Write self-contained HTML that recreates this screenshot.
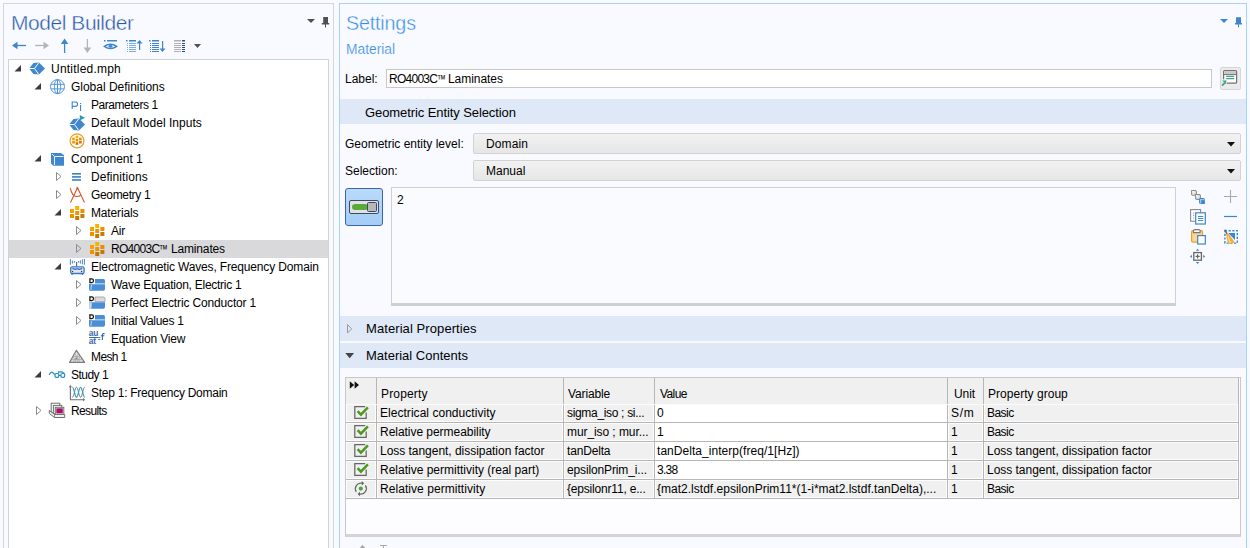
<!DOCTYPE html><html><head><meta charset="utf-8"><style>
*{margin:0;padding:0;box-sizing:border-box}
html,body{width:1250px;height:548px;overflow:hidden;background:#f8faff;font-family:"Liberation Sans",sans-serif;font-size:12px;color:#000}
.a{position:absolute}
.t{position:absolute;white-space:nowrap;line-height:14px}
svg{position:absolute;overflow:visible}
</style></head><body>
<div class="a" style="left:3px;top:3px;width:331px;height:560px;border:1px solid #d6d6d6;background:#f8faff"></div>
<div class="t" style="left:11px;top:12px;font-size:21px;line-height:22px;letter-spacing:-0.45px;color:#2858a8;-webkit-text-stroke:0.4px #f8faff">Model Builder</div>
<svg style="left:0;top:0" width="1250" height="60"><path d="M307 19h8l-4 4z" fill="#505050"/><path d="M323.2 17h4.8v6h1.2v1.4h-3.2v3h-1v-3h-3.2v-1.4h1.4z" fill="#505050"/></svg>
<svg style="left:0;top:0" width="340" height="60">
<g fill="#3d86cc" stroke="#3d86cc"><path d="M12 45.5l5.5-3.8v7.6z" stroke="none"/><path d="M16 45.5h10" stroke-width="1.3"/></g>
<g fill="#b4b4b4" stroke="#b4b4b4"><path d="M49 45.5l-5.5-3.8v7.6z" stroke="none"/><path d="M35 45.5h10" stroke-width="1.3"/></g>
<g fill="#3d86cc" stroke="#3d86cc"><path d="M64.6 38.6l3.8 5.5h-7.6z" stroke="none"/><path d="M64.6 43v10" stroke-width="1.3"/></g>
<g fill="#b4b4b4" stroke="#b4b4b4"><path d="M87.4 53l3.8-5.5h-7.6z" stroke="none"/><path d="M87.4 39v10" stroke-width="1.3"/></g>
<g fill="#3d86cc"><rect x="104" y="40" width="1.5" height="1.5"/><rect x="107" y="40" width="10" height="1.5"/>
<path d="M104.3 46.4q6.2-4.4 12.4 0q-6.2 4.4-12.4 0z" fill="none" stroke="#3d86cc" stroke-width="1.4"/><ellipse cx="110.5" cy="46.4" rx="2" ry="1.3"/></g>
<g fill="#3d86cc"><rect x="126" y="40" width="1.5" height="1.5"/><rect x="129" y="40" width="7" height="1.5"/>
<rect x="127" y="43" width="1" height="1" fill="#7ab0e0"/><rect x="129" y="43" width="7" height="1" fill="#7ab0e0"/>
<rect x="127" y="45" width="1" height="1" fill="#7ab0e0"/><rect x="129" y="45" width="7" height="1" fill="#7ab0e0"/>
<rect x="127" y="47" width="1" height="1" fill="#7ab0e0"/><rect x="129" y="47" width="7" height="1" fill="#7ab0e0"/>
<rect x="127" y="49" width="1" height="1" fill="#7ab0e0"/><rect x="129" y="49" width="7" height="1" fill="#7ab0e0"/>
<rect x="127" y="51" width="1" height="1" fill="#7ab0e0"/><rect x="129" y="51" width="7" height="1" fill="#7ab0e0"/>
<path d="M139.5 40l3 3.5h-6z"/><rect x="139" y="42" width="1.2" height="8"/></g>
<g fill="#3d86cc"><rect x="149" y="40" width="1.5" height="1.5"/><rect x="152" y="40" width="7" height="1.5"/>
<rect x="150" y="43" width="1" height="1"/><rect x="152" y="43" width="7" height="1"/>
<rect x="150" y="45" width="1" height="1"/><rect x="152" y="45" width="7" height="1"/>
<rect x="150" y="47" width="1" height="1"/><rect x="152" y="47" width="7" height="1"/>
<rect x="150" y="49" width="1" height="1"/><rect x="152" y="49" width="7" height="1"/>
<rect x="150" y="51" width="1" height="1"/><rect x="152" y="51" width="7" height="1"/>
<path d="M162.5 52l3-3.5h-6z"/><rect x="162" y="41" width="1.2" height="8"/></g>
<g><rect x="174" y="40" width="7" height="1.5" fill="#b0b0b0"/><rect x="182" y="40" width="3" height="1.5" fill="#2c4a80"/>
<rect x="174" y="43" width="7" height="1" fill="#b0b0b0"/><rect x="182" y="43" width="3" height="1" fill="#2c4a80"/>
<rect x="174" y="45" width="7" height="1" fill="#b0b0b0"/><rect x="182" y="45" width="3" height="1" fill="#2c4a80"/>
<rect x="174" y="47" width="7" height="1" fill="#b0b0b0"/><rect x="182" y="47" width="3" height="1" fill="#2c4a80"/>
<rect x="174" y="49" width="7" height="1" fill="#b0b0b0"/><rect x="182" y="49" width="3" height="1" fill="#2c4a80"/>
<rect x="174" y="51" width="7" height="1" fill="#b0b0b0"/><rect x="182" y="51" width="3" height="1" fill="#2c4a80"/></g>
<path d="M194 44h7l-3.5 4z" fill="#505050"/>
</svg>
<div class="a" style="left:8px;top:59px;width:321px;height:500px;border:1px solid #d2d2d2;background:#fff"></div>
<div class="a" style="left:9px;top:240px;width:319px;height:18px;background:#d9d9dc"></div>
<svg style="left:0;top:0" width="340" height="548"><path d="M21 65v6.5h-6.5z" fill="#3c3c3c"/><path d="M29 68.5L33.5 63.0L39 62.5L45 68.5L39 74.5L33.5 74.0z" fill="#3f88d0"/><path d="M29 68.5H34.5L38.5 63.0M34.5 68.5L38.5 74.0" stroke="#fff" stroke-width="1" fill="none"/><path d="M41 83v6.5h-6.5z" fill="#3c3c3c"/><g fill="none" stroke="#4f96dc" stroke-width="1"><circle cx="57.5" cy="86.6" r="7"/><ellipse cx="57.5" cy="86.6" rx="3.2" ry="7"/><path d="M57.5 79.6v14M50.9 84.3h13.2M50.9 88.89999999999999h13.2"/></g><path d="M72.2 109V102h3.2a2.2 2.2 0 0 1 0 4.4H72.2" fill="none" stroke="#3d86d0" stroke-width="1.1"/><rect x="80" y="105" width="1.1" height="6" fill="#3d86d0"/><rect x="80" y="103" width="1.1" height="1.1" fill="#3d86d0"/><path d="M69 124.5L73.5 119.0L79 118.5L85 124.5L79 130.5L73.5 130.0z" fill="#3f88d0"/><path d="M69 124.5H74.5L78.5 119.0M74.5 124.5L78.5 130.0" stroke="#fff" stroke-width="1" fill="none"/><path d="M79.8 115L85 117.8L79.8 120.6z" fill="#2a9ab8"/><circle cx="77" cy="140.8" r="7" fill="#fff" stroke="#ec9a2a" stroke-width="1.2"/><rect x="75.63" y="135.6" width="2.64" height="2.64" fill="#f6b400"/><rect x="72.2" y="137.58" width="2.64" height="2.64" fill="#f4a200"/><rect x="75.63" y="138.9" width="2.64" height="2.64" fill="#ee9400"/><rect x="79.06" y="137.58" width="2.64" height="2.64" fill="#e89000"/><rect x="72.2" y="140.88" width="2.64" height="2.64" fill="#ee9000"/><rect x="75.63" y="142.2" width="2.64" height="2.64" fill="#c87800"/><rect x="79.06" y="140.88" width="2.64" height="2.64" fill="#c47a10"/><path d="M41 155v6.5h-6.5z" fill="#3c3c3c"/><path d="M51 153H61L64 155.2V165.7H53.4L51 163.5z" fill="#3f88d0"/><path d="M52 154L54.5 156.5H63.5M54.5 156.5V165" stroke="#e8f0fa" stroke-width="1" fill="none"/><path d="M56.5 172.5l4.5 4-4.5 4z" fill="none" stroke="#8c8c8c" stroke-width="1"/><g fill="#3a80cc"><rect x="72" y="173" width="9" height="1.6"/><rect x="72" y="176.1" width="9" height="1.6"/><rect x="72" y="179.2" width="9" height="1.6"/></g><path d="M56.5 190.5l4.5 4-4.5 4z" fill="none" stroke="#8c8c8c" stroke-width="1"/><path d="M70.5 202.5L77.5 187.8L84.5 202.5M70.3 188.2Q72 197 77.5 196.5Q80 196.3 81 194.4" fill="none" stroke="#d8532c" stroke-width="1.1"/><path d="M76.5 187.5l1.5 1.5" stroke="#d8532c" stroke-width="1.2"/><path d="M61 209v6.5h-6.5z" fill="#3c3c3c"/><rect x="75.2" y="206" width="4" height="4" fill="#f6b400"/><rect x="70.0" y="209" width="4" height="4" fill="#f4a200"/><rect x="75.2" y="211" width="4" height="4" fill="#ee9400"/><rect x="80.4" y="209" width="4" height="4" fill="#e89000"/><rect x="70.0" y="214" width="4" height="4" fill="#ee9000"/><rect x="75.2" y="216" width="4" height="4" fill="#c87800"/><rect x="80.4" y="214" width="4" height="4" fill="#c47a10"/><path d="M76.5 226.5l4.5 4-4.5 4z" fill="none" stroke="#8c8c8c" stroke-width="1"/><rect x="95.2" y="224" width="4" height="4" fill="#f6b400"/><rect x="90.0" y="227" width="4" height="4" fill="#f4a200"/><rect x="95.2" y="229" width="4" height="4" fill="#ee9400"/><rect x="100.4" y="227" width="4" height="4" fill="#e89000"/><rect x="90.0" y="232" width="4" height="4" fill="#ee9000"/><rect x="95.2" y="234" width="4" height="4" fill="#c87800"/><rect x="100.4" y="232" width="4" height="4" fill="#c47a10"/><path d="M76.5 244.5l4.5 4-4.5 4z" fill="none" stroke="#8c8c8c" stroke-width="1"/><rect x="95.2" y="242" width="4" height="4" fill="#f6b400"/><rect x="90.0" y="245" width="4" height="4" fill="#f4a200"/><rect x="95.2" y="247" width="4" height="4" fill="#ee9400"/><rect x="100.4" y="245" width="4" height="4" fill="#e89000"/><rect x="90.0" y="250" width="4" height="4" fill="#ee9000"/><rect x="95.2" y="252" width="4" height="4" fill="#c87800"/><rect x="100.4" y="250" width="4" height="4" fill="#c47a10"/><path d="M61 263v6.5h-6.5z" fill="#3c3c3c"/><path d="M70.4 259V264.8M72.4 260.6V263.6M74.4 261V262.8M78.6 261V262.8M80.4 260.3V263.6M82.4 259.3V264.4M84.4 259V264.7" stroke="#3a78c4" stroke-width="0.9" fill="none"/><path d="M76.6 262V266.5" stroke="#3a6aa8" stroke-width="1.1"/><rect x="70.7" y="266.9" width="13.4" height="6.6" rx="1.6" fill="#e4e6ea" stroke="#3a78c4" stroke-width="1.3"/><path d="M72.3 269q1-0.7 2 0t2 0t2 0t2 0t2 0" stroke="#3a78c4" stroke-width="1.5" fill="none"/><circle cx="72.6" cy="271.5" r="0.7" fill="#333a6a"/><circle cx="81.6" cy="271.5" r="0.7" fill="#333a6a"/><path d="M72 274v1M82.5 274v1" stroke="#3a78c4" stroke-width="1.3"/><path d="M76.5 280.5l4.5 4-4.5 4z" fill="none" stroke="#8c8c8c" stroke-width="1"/><path d="M95 279H103.5a1.5 2.3 0 0 1 1.5 2.3V283.6H95z" fill="#4a8fd6"/><path d="M89 284.2H105V289a1.5 1.8 0 0 1 -1.5 1.8H90.5a1.5 1.8 0 0 1 -1.5-1.8z" fill="#4a8fd6"/><path d="M89 284.2H91.2V290.8H90.5a1.5 1.8 0 0 1 -1.5-1.8z" fill="#4a8fd6"/><path d="M91.5 285L90.8 290" stroke="#e8f0fa" stroke-width="0.7"/><path d="M89.9 278.9V282.5H91.7Q93.5 282.5 93.5 280.7Q93.5 278.9 91.7 278.9z" fill="none" stroke="#111" stroke-width="1.25"/><path d="M76.5 298.5l4.5 4-4.5 4z" fill="none" stroke="#8c8c8c" stroke-width="1"/><path d="M95 297H103.5a1.5 2.3 0 0 1 1.5 2.3V301.6H95z" fill="#dcdcdc" stroke="#9a9a9a" stroke-width="0.8"/><path d="M89 302.2H105V307a1.5 1.8 0 0 1 -1.5 1.8H90.5a1.5 1.8 0 0 1 -1.5-1.8z" fill="#4a8fd6"/><path d="M89 302.2H91.2V308.8H90.5a1.5 1.8 0 0 1 -1.5-1.8z" fill="#cfcfcf"/><path d="M91.5 303L90.8 308" stroke="#e8f0fa" stroke-width="0.7"/><path d="M89.9 296.9V300.5H91.7Q93.5 300.5 93.5 298.7Q93.5 296.9 91.7 296.9z" fill="none" stroke="#111" stroke-width="1.25"/><path d="M76.5 316.5l4.5 4-4.5 4z" fill="none" stroke="#8c8c8c" stroke-width="1"/><path d="M95 315H103.5a1.5 2.3 0 0 1 1.5 2.3V319.6H95z" fill="#4a8fd6"/><path d="M89 320.2H105V325a1.5 1.8 0 0 1 -1.5 1.8H90.5a1.5 1.8 0 0 1 -1.5-1.8z" fill="#4a8fd6"/><path d="M89 320.2H91.2V326.8H90.5a1.5 1.8 0 0 1 -1.5-1.8z" fill="#4a8fd6"/><path d="M91.5 321L90.8 326" stroke="#e8f0fa" stroke-width="0.7"/><path d="M89.9 314.9V318.5H91.7Q93.5 318.5 93.5 316.7Q93.5 314.9 91.7 314.9z" fill="none" stroke="#111" stroke-width="1.25"/><text x="88.7" y="336" font-size="8.4" fill="#3a68ac" font-family="Liberation Sans" font-weight="bold" letter-spacing="-0.2">au</text><rect x="89" y="337" width="9" height="1" fill="#3a68ac"/><text x="88.7" y="344" font-size="8.4" fill="#3a68ac" font-family="Liberation Sans" font-weight="bold" letter-spacing="-0.2">at</text><rect x="98.3" y="337" width="2" height="0.9" fill="#3a68ac"/><rect x="98.3" y="339" width="2" height="0.9" fill="#3a68ac"/><path d="M104.6 333.6h-1.2a1 1 0 0 0 -1 1V340M100.8 335.8h3.5" stroke="#3a68ac" stroke-width="1.1" fill="none"/><path d="M69.6 362.4L76.4 350.3L84.6 362.4z" fill="#e2e2e2" stroke="#7a7a7a" stroke-width="1.2" stroke-linejoin="round"/><path d="M72.9 356.5h7.4M71.2 359.6h11.4M72.9 356.5l3.6 5.9M80.3 356.5l-3.6 5.9M74.6 353.5l5.5 8.9M78.4 353.5l-5.5 8.9" stroke="#a0a0a0" stroke-width="0.7" fill="none"/><circle cx="76.5" cy="358.5" r="1" fill="#888"/><path d="M41 371v6.5h-6.5z" fill="#3c3c3c"/><path d="M49.4 374.5Q50.8 371.5 52.2 372.3L54.5 374.2" fill="none" stroke="#2390b8" stroke-width="1.2" stroke-linecap="round"/><rect x="55" y="373.5" width="3.8" height="3.8" rx="1.4" fill="none" stroke="#2390b8" stroke-width="1.2"/><rect x="60.9" y="373.5" width="3.8" height="3.8" rx="1.4" fill="none" stroke="#2390b8" stroke-width="1.2"/><path d="M58.8 375.4h2.1M58.6 373.4V371.9H62L64.5 373.5" fill="none" stroke="#2390b8" stroke-width="1.1"/><path d="M70.4 386V399.7H84" fill="none" stroke="#6e6e6e" stroke-width="1.1"/><path d="M70.4 385l-1.6 2.2h3.2zM85.2 399.7l-2.2-1.6v3.2z" fill="#6e6e6e"/><path d="M72.4 397.3C74.0 397.3 74.9 387.2 76.5 387.2C78.1 387.2 79.0 397.3 80.6 397.3C82.2 397.3 83.1 387.2 84.7 387.2" fill="none" stroke="#7a7a7a" stroke-width="1"/><path d="M72.4 387.2C74.0 387.2 74.9 397.3 76.5 397.3C78.1 397.3 79.0 387.2 80.6 387.2C82.2 387.2 83.1 397.3 84.7 397.3" fill="none" stroke="#2a9ec4" stroke-width="1.1"/><path d="M36.5 406.5l4.5 4-4.5 4z" fill="none" stroke="#8c8c8c" stroke-width="1"/><rect x="51.2" y="403.2" width="8.6" height="9.5" fill="#fff" stroke="#6e6e6e" stroke-width="1"/><rect x="53.4" y="405.4" width="8.3" height="8.5" fill="#fff" stroke="#6e6e6e" stroke-width="1"/><path d="M49.3 410.4L54.5 414.4H64.7V417.5H54.5L49.3 413.5z" fill="#f2f2f2" stroke="#6e6e6e" stroke-width="1" stroke-linejoin="round"/><path d="M54.5 414.4V417.5" stroke="#6e6e6e" stroke-width="0.8"/><rect x="55.3" y="407.3" width="8.5" height="7.1" fill="#fff" stroke="#6e6e6e" stroke-width="1"/><rect x="56.3" y="408.3" width="6.5" height="5.1" fill="#a8106a"/></svg>
<div class="t" style="left:51px;top:62px;font-size:12px;color:#000;letter-spacing:0.218px;">Untitled.mph</div>
<div class="t" style="left:71px;top:80px;font-size:12px;color:#000;letter-spacing:-0.018px;">Global Definitions</div>
<div class="t" style="left:91px;top:98px;font-size:12px;color:#000;letter-spacing:-0.445px;">Parameters 1</div>
<div class="t" style="left:91px;top:116px;font-size:12px;color:#000;letter-spacing:0.042px;">Default Model Inputs</div>
<div class="t" style="left:91px;top:134px;font-size:12px;color:#000;letter-spacing:-0.150px;">Materials</div>
<div class="t" style="left:71px;top:152px;font-size:12px;color:#000;letter-spacing:-0.030px;">Component 1</div>
<div class="t" style="left:91px;top:170px;font-size:12px;color:#000;letter-spacing:0.060px;">Definitions</div>
<div class="t" style="left:91px;top:188px;font-size:12px;color:#000;letter-spacing:-0.344px;">Geometry 1</div>
<div class="t" style="left:91px;top:206px;font-size:12px;color:#000;letter-spacing:-0.150px;">Materials</div>
<div class="t" style="left:111px;top:224px;font-size:12px;color:#000;letter-spacing:-0.200px;">Air</div>
<div class="t" style="left:111px;top:242px;font-size:12px;color:#000;letter-spacing:-0.700px;">RO4003C</div>
<div class="t" style="left:158.7px;top:242px;font-size:12px;color:#000;transform:scaleX(0.72);transform-origin:0 0">™</div>
<div class="t" style="left:171px;top:242px;font-size:12px;color:#000;letter-spacing:-0.163px;">Laminates</div>
<div class="t" style="left:91px;top:260px;font-size:12px;color:#000;letter-spacing:-0.153px;">Electromagnetic Waves, Frequency Domain</div>
<div class="t" style="left:111px;top:278px;font-size:12px;color:#000;letter-spacing:-0.258px;">Wave Equation, Electric 1</div>
<div class="t" style="left:111px;top:296px;font-size:12px;color:#000;letter-spacing:-0.152px;">Perfect Electric Conductor 1</div>
<div class="t" style="left:111px;top:314px;font-size:12px;color:#000;letter-spacing:-0.287px;">Initial Values 1</div>
<div class="t" style="left:111px;top:332px;font-size:12px;color:#000;letter-spacing:-0.167px;">Equation View</div>
<div class="t" style="left:91px;top:350px;font-size:12px;color:#000;letter-spacing:-0.620px;">Mesh 1</div>
<div class="t" style="left:71px;top:368px;font-size:12px;color:#000;letter-spacing:-0.517px;">Study 1</div>
<div class="t" style="left:91px;top:386px;font-size:12px;color:#000;letter-spacing:-0.261px;">Step 1: Frequency Domain</div>
<div class="t" style="left:71px;top:404px;font-size:12px;color:#000;letter-spacing:-0.633px;">Results</div>
<div class="a" style="left:339px;top:3px;width:908px;height:560px;border:1px solid #a6d1fb;background:#f8faff"></div>
<div class="t" style="left:346px;top:12px;font-size:21px;line-height:22px;letter-spacing:-0.2px;transform:scaleX(0.94);transform-origin:0 0;color:#3b8fe2;-webkit-text-stroke:0.4px #f8faff">Settings</div>
<div class="t" style="left:346px;top:41px;font-size:15px;line-height:16px;letter-spacing:0px;transform:scaleX(0.92);transform-origin:0 0;color:#3b8fe2;-webkit-text-stroke:0.2px #f8faff">Material</div>
<svg style="left:0;top:0" width="1250" height="60"><path d="M1220 19h8l-4 4z" fill="#3d86cc"/><path d="M1236 17.2h5v5.8h1v1.4h-3v2.8h-1v-2.8h-3v-1.4h1z" fill="#3d86cc"/></svg>
<div class="t" style="left:345px;top:72px;font-size:12px;color:#000;">Label:</div>
<div class="a" style="left:386px;top:69px;width:826px;height:19px;border:1px solid #c8c8c8;background:#fff"></div>
<div class="t" style="left:389px;top:72px;font-size:12px;color:#000;letter-spacing:-0.733px;">RO4003C</div>
<div class="t" style="left:436.5px;top:72px;font-size:12px;color:#000;transform:scaleX(0.72);transform-origin:0 0">™</div>
<div class="t" style="left:448px;top:72px;font-size:12px;color:#000;letter-spacing:-0.050px;">Laminates</div>
<div class="a" style="left:1220px;top:67px;width:21px;height:23px;border:1px solid #d6d6d6;border-radius:2px;background:#ebebeb"></div>
<svg style="left:0;top:0" width="1250" height="100"><rect x="1223.6" y="70.6" width="13" height="12.6" rx="1" fill="#fff" stroke="#727272" stroke-width="1.2"/><rect x="1224.2" y="71.2" width="11.8" height="3" fill="#c8c8c8"/><path d="M1223.6 74.6h13" stroke="#727272" stroke-width="1"/><path d="M1226.2 76.4h8M1226.2 78.6h8" stroke="#3aa888" stroke-width="1.1"/><path d="M1221.2 79.2H1227V85z" fill="#ebebeb"/><path d="M1221.5 86L1224.6 82.9" stroke="#ebebeb" stroke-width="3"/><path d="M1222 85.6L1224.8 82.8" stroke="#3aa888" stroke-width="1.7"/><path d="M1222.4 80.4H1226.2V84.2z" fill="#3aa888"/></svg>
<div class="a" style="left:340px;top:99px;width:906px;height:25px;background:#dfe8f6"></div>
<div class="t" style="left:365px;top:106px;font-size:13px;color:#000;letter-spacing:-0.088px;">Geometric Entity Selection</div>
<div class="t" style="left:345px;top:137px;font-size:12px;color:#000;">Geometric entity level:</div>
<div class="a" style="left:473px;top:133px;width:768px;height:21px;border:1px solid #d2d2d2;border-radius:2px;background:linear-gradient(#f2f2f2,#e6e6e6)"></div>
<div class="t" style="left:486px;top:137px;font-size:12px;color:#000;letter-spacing:0.100px;">Domain</div>
<div class="t" style="left:345px;top:164px;font-size:12px;color:#000;">Selection:</div>
<div class="a" style="left:473px;top:160px;width:768px;height:21px;border:1px solid #d2d2d2;border-radius:2px;background:linear-gradient(#f2f2f2,#e6e6e6)"></div>
<div class="t" style="left:486px;top:164px;font-size:12px;color:#000;">Manual</div>
<svg style="left:0;top:0" width="1250" height="200"><path d="M1227 142h8l-4 4.5z" fill="#111"/><path d="M1227 169h8l-4 4.5z" fill="#111"/></svg>
<div class="a" style="left:345px;top:188px;width:38px;height:38px;border:1px solid #3d64a8;border-radius:3px;background:linear-gradient(#b8dafb,#a4cdf5)"></div>
<svg style="left:0;top:0" width="400" height="240"><rect x="349.5" y="200.5" width="29" height="13" rx="1.5" fill="#e2e2e2" stroke="#3c4a6a"/><rect x="352" y="204" width="16" height="6" rx="3" fill="#5aaa3a"/><rect x="367.5" y="202.5" width="9" height="9" rx="1" fill="#b8b8b8" stroke="#3c4a6a"/></svg>
<div class="a" style="left:391px;top:187px;width:785px;height:119px;border:1px solid #d0d0d0;border-bottom:3px solid #d0d0d0;background:#fafbff"></div>
<div class="t" style="left:397px;top:193px;font-size:12px;color:#000;">2</div>
<svg style="left:0;top:0" width="1250" height="300"><path d="M1191.6 190.5H1195.5L1196.3999999999999 191.4V195.3H1192.5L1191.6 194.4z" fill="#d9d9d9" stroke="#8e8e8e" stroke-width="1.1"/><path d="M1193.1 194.6V192H1195.6999999999998M1192.0 190.9L1193.1 192" stroke="#fff" stroke-width="0.9" fill="none"/><path d="M1195.6 194.6H1199.5L1200.3999999999999 195.5V199.4H1196.5L1195.6 198.5z" fill="#d9d9d9" stroke="#8e8e8e" stroke-width="1.1"/><path d="M1197.1 198.7V196.1H1199.6999999999998M1196.0 195.0L1197.1 196.1" stroke="#fff" stroke-width="0.9" fill="none"/><path d="M1199.1 198.1H1203.8999999999999L1204.8999999999999 199.1V203.9H1200.1L1199.1 202.9z" fill="#3a86d0"/><path d="M1200.6999999999998 203.5V199.7H1204.5M1199.5 198.5L1200.6999999999998 199.7" stroke="#cfe3f6" stroke-width="0.8" fill="none"/><path d="M1230.5 190v13M1224 196.5h13" stroke="#a8a8a8" stroke-width="1.1"/><rect x="1190.6" y="209.6" width="10" height="11.6" fill="#fff" stroke="#8a8a8a" stroke-width="1.1"/><path d="M1193 213.2h1.2M1193 215.6h1.2M1193 218h1.2" stroke="#999" stroke-width="0.9"/><rect x="1195.7" y="212.8" width="9.6" height="11.2" fill="#fff" stroke="#3a86d0" stroke-width="1.2"/><path d="M1198 216.5h5.2M1198 218.5h5.2M1198 220.5h5.2" stroke="#3a86d0" stroke-width="0.95"/><path d="M1224 216.5h13" stroke="#3a86d0" stroke-width="1.2"/><rect x="1191.6" y="230.6" width="11" height="11.6" rx="1.5" fill="#fbd592" stroke="#e9a22a" stroke-width="1.2"/><path d="M1193.5 232.6V231a1.4 1.4 0 0 1 1.4-1.4h3.8a1.4 1.4 0 0 1 1.4 1.4v1.6z" fill="#fff" stroke="#777" stroke-width="1.1"/><rect x="1197.7" y="235.6" width="7.6" height="8.4" fill="#fff" stroke="#3a86d0" stroke-width="1.2"/><rect x="1224.9" y="230.7" width="12.4" height="12.4" fill="none" stroke="#3a86d0" stroke-width="1.4" stroke-dasharray="2.2 1.5"/><path d="M1228.2 233.1H1235V240z" fill="#3a86d0"/><path d="M1224.8 229.6L1227.6 235" stroke="#6a6a6a" stroke-width="1.5"/><path d="M1226.3 234.2Q1228.5 232.8 1230 235.5L1235 242.6Q1232 243.5 1228.4 244.2Q1226 239 1226.3 234.2z" fill="#f2b040"/><path d="M1228 236.5Q1229 240 1230.5 243" stroke="#fbe0a0" stroke-width="1.2" fill="none"/><rect x="1193.8" y="252.6" width="7.6" height="7.6" fill="#fff" stroke="#666" stroke-width="1.3"/><path d="M1197.6 254.3v4.2M1195.5 256.4h4.2" stroke="#666" stroke-width="1.2"/><path d="M1197.6 248.8l1.7 2h-3.4zM1197.6 264l1.7-2h-3.4zM1189.9 256.4l2-1.7v3.4zM1205.3 256.4l-2-1.7v3.4z" fill="#3a86d0"/></svg>
<div class="a" style="left:340px;top:316px;width:906px;height:25px;background:#dfe8f6"></div>
<div class="t" style="left:366px;top:322px;font-size:13px;color:#000;letter-spacing:0.083px;">Material Properties</div>
<div class="a" style="left:340px;top:343px;width:906px;height:25px;background:#dfe8f6"></div>
<div class="t" style="left:366px;top:349px;font-size:13px;color:#000;">Material Contents</div>
<svg style="left:0;top:0" width="400" height="400"><path d="M347.5 324.6l4.2 4.2-4.2 4.2z" fill="none" stroke="#9a9a9a"/><path d="M345.3 353h8.8l-4.4 5.2z" fill="#444"/></svg>
<div class="a" style="left:345px;top:377px;width:896px;height:160px;border:1px solid #c8c8c8;border-bottom:3px solid #d4d4d8;background:#fdfdff"></div>
<div class="a" style="left:346px;top:378px;width:892px;height:26px;background:#f0f0f0"></div>
<div class="a" style="left:346px;top:404px;width:30px;height:18px;background:#f0f0f0;box-shadow:inset 0 0 0 1px #fdfdfd;"></div>
<div class="a" style="left:377px;top:404px;width:186px;height:18px;background:#f0f0f0;box-shadow:inset 0 0 0 1px #fdfdfd;"></div>
<div class="a" style="left:564px;top:404px;width:90px;height:18px;background:#f0f0f0;box-shadow:inset 0 0 0 1px #fdfdfd;"></div>
<div class="a" style="left:655px;top:404px;width:292px;height:18px;background:#fff;"></div>
<div class="a" style="left:948px;top:404px;width:35px;height:18px;background:#f0f0f0;box-shadow:inset 0 0 0 1px #fdfdfd;"></div>
<div class="a" style="left:984px;top:404px;width:254px;height:18px;background:#f0f0f0;box-shadow:inset 0 0 0 1px #fdfdfd;"></div>
<div class="a" style="left:346px;top:422px;width:892px;height:1px;background:#b6b6b6"></div>
<div class="t" style="left:380px;top:406px;font-size:12px;color:#000;letter-spacing:0.036px;">Electrical conductivity</div>
<div class="t" style="left:567px;top:406px;font-size:12px;color:#000;letter-spacing:-0.325px;">sigma_iso ; si...</div>
<div class="t" style="left:657px;top:406px;font-size:12px;color:#000;">0</div>
<div class="t" style="left:951px;top:406px;font-size:12px;color:#000;letter-spacing:0.750px;">S/m</div>
<div class="t" style="left:987px;top:406px;font-size:12px;color:#000;letter-spacing:-0.550px;">Basic</div>
<div class="a" style="left:346px;top:423px;width:30px;height:18px;background:#f0f0f0;box-shadow:inset 0 0 0 1px #fdfdfd;"></div>
<div class="a" style="left:377px;top:423px;width:186px;height:18px;background:#f0f0f0;box-shadow:inset 0 0 0 1px #fdfdfd;"></div>
<div class="a" style="left:564px;top:423px;width:90px;height:18px;background:#f0f0f0;box-shadow:inset 0 0 0 1px #fdfdfd;"></div>
<div class="a" style="left:655px;top:423px;width:292px;height:18px;background:#fff;"></div>
<div class="a" style="left:948px;top:423px;width:35px;height:18px;background:#f0f0f0;box-shadow:inset 0 0 0 1px #fdfdfd;"></div>
<div class="a" style="left:984px;top:423px;width:254px;height:18px;background:#f0f0f0;box-shadow:inset 0 0 0 1px #fdfdfd;"></div>
<div class="a" style="left:346px;top:441px;width:892px;height:1px;background:#b6b6b6"></div>
<div class="t" style="left:380px;top:425px;font-size:12px;color:#000;letter-spacing:-0.040px;">Relative permeability</div>
<div class="t" style="left:567px;top:425px;font-size:12px;color:#000;letter-spacing:-0.080px;">mur_iso ; mur...</div>
<div class="t" style="left:657px;top:425px;font-size:12px;color:#000;">1</div>
<div class="t" style="left:951px;top:425px;font-size:12px;color:#000;">1</div>
<div class="t" style="left:987px;top:425px;font-size:12px;color:#000;letter-spacing:-0.550px;">Basic</div>
<div class="a" style="left:346px;top:442px;width:30px;height:18px;background:#f0f0f0;box-shadow:inset 0 0 0 1px #fdfdfd;"></div>
<div class="a" style="left:377px;top:442px;width:186px;height:18px;background:#f0f0f0;box-shadow:inset 0 0 0 1px #fdfdfd;"></div>
<div class="a" style="left:564px;top:442px;width:90px;height:18px;background:#f0f0f0;box-shadow:inset 0 0 0 1px #fdfdfd;"></div>
<div class="a" style="left:655px;top:442px;width:292px;height:18px;background:#fff;"></div>
<div class="a" style="left:948px;top:442px;width:35px;height:18px;background:#f0f0f0;box-shadow:inset 0 0 0 1px #fdfdfd;"></div>
<div class="a" style="left:984px;top:442px;width:254px;height:18px;background:#f0f0f0;box-shadow:inset 0 0 0 1px #fdfdfd;"></div>
<div class="a" style="left:346px;top:460px;width:892px;height:1px;background:#b6b6b6"></div>
<div class="t" style="left:380px;top:444px;font-size:12px;color:#000;letter-spacing:-0.032px;">Loss tangent, dissipation factor</div>
<div class="t" style="left:567px;top:444px;font-size:12px;color:#000;letter-spacing:-0.171px;">tanDelta</div>
<div class="t" style="left:657px;top:444px;font-size:12px;color:#000;letter-spacing:0.046px;">tanDelta_interp(freq/1[Hz])</div>
<div class="t" style="left:951px;top:444px;font-size:12px;color:#000;">1</div>
<div class="t" style="left:987px;top:444px;font-size:12px;color:#000;letter-spacing:-0.026px;">Loss tangent, dissipation factor</div>
<div class="a" style="left:346px;top:461px;width:30px;height:18px;background:#f0f0f0;box-shadow:inset 0 0 0 1px #fdfdfd;"></div>
<div class="a" style="left:377px;top:461px;width:186px;height:18px;background:#f0f0f0;box-shadow:inset 0 0 0 1px #fdfdfd;"></div>
<div class="a" style="left:564px;top:461px;width:90px;height:18px;background:#f0f0f0;box-shadow:inset 0 0 0 1px #fdfdfd;"></div>
<div class="a" style="left:655px;top:461px;width:292px;height:18px;background:#fff;"></div>
<div class="a" style="left:948px;top:461px;width:35px;height:18px;background:#f0f0f0;box-shadow:inset 0 0 0 1px #fdfdfd;"></div>
<div class="a" style="left:984px;top:461px;width:254px;height:18px;background:#f0f0f0;box-shadow:inset 0 0 0 1px #fdfdfd;"></div>
<div class="a" style="left:346px;top:479px;width:892px;height:1px;background:#b6b6b6"></div>
<div class="t" style="left:380px;top:463px;font-size:12px;color:#000;letter-spacing:-0.003px;">Relative permittivity (real part)</div>
<div class="t" style="left:567px;top:463px;font-size:12px;color:#000;letter-spacing:-0.133px;">epsilonPrim_i...</div>
<div class="t" style="left:657px;top:463px;font-size:12px;color:#000;letter-spacing:-0.767px;">3.38</div>
<div class="t" style="left:951px;top:463px;font-size:12px;color:#000;">1</div>
<div class="t" style="left:987px;top:463px;font-size:12px;color:#000;letter-spacing:-0.026px;">Loss tangent, dissipation factor</div>
<div class="a" style="left:346px;top:480px;width:30px;height:18px;background:#f0f0f0;box-shadow:inset 0 0 0 1px #fdfdfd;"></div>
<div class="a" style="left:377px;top:480px;width:186px;height:18px;background:#f0f0f0;box-shadow:inset 0 0 0 1px #fdfdfd;"></div>
<div class="a" style="left:564px;top:480px;width:90px;height:18px;background:#f0f0f0;box-shadow:inset 0 0 0 1px #fdfdfd;"></div>
<div class="a" style="left:655px;top:480px;width:292px;height:18px;background:#f0f0f0;box-shadow:inset 0 0 0 1px #fdfdfd;"></div>
<div class="a" style="left:948px;top:480px;width:35px;height:18px;background:#f0f0f0;box-shadow:inset 0 0 0 1px #fdfdfd;"></div>
<div class="a" style="left:984px;top:480px;width:254px;height:18px;background:#f0f0f0;box-shadow:inset 0 0 0 1px #fdfdfd;"></div>
<div class="a" style="left:346px;top:498px;width:892px;height:1px;background:#b6b6b6"></div>
<div class="t" style="left:380px;top:482px;font-size:12px;color:#000;letter-spacing:0.055px;">Relative permittivity</div>
<div class="t" style="left:567px;top:482px;font-size:12px;color:#000;letter-spacing:-0.188px;">{epsilonr11, e...</div>
<div class="t" style="left:657px;top:482px;font-size:12px;color:#000;letter-spacing:0.013px;">{mat2.lstdf.epsilonPrim11*(1-i*mat2.lstdf.tanDelta),...</div>
<div class="t" style="left:951px;top:482px;font-size:12px;color:#000;">1</div>
<div class="t" style="left:987px;top:482px;font-size:12px;color:#000;letter-spacing:-0.550px;">Basic</div>
<div class="a" style="left:376px;top:378px;width:1px;height:121px;background:#b6b6b6"></div>
<div class="a" style="left:563px;top:378px;width:1px;height:121px;background:#b6b6b6"></div>
<div class="a" style="left:654px;top:378px;width:1px;height:121px;background:#b6b6b6"></div>
<div class="a" style="left:947px;top:378px;width:1px;height:121px;background:#b6b6b6"></div>
<div class="a" style="left:983px;top:378px;width:1px;height:121px;background:#b6b6b6"></div>
<div class="a" style="left:1238px;top:378px;width:1px;height:121px;background:#b6b6b6"></div>
<div class="a" style="left:346px;top:404px;width:892px;height:1px;background:#fbfbfb"></div>
<div class="t" style="left:381px;top:387px;font-size:12px;color:#000;letter-spacing:0.157px;">Property</div>
<div class="t" style="left:568px;top:387px;font-size:12px;color:#000;letter-spacing:-0.129px;">Variable</div>
<div class="t" style="left:660px;top:387px;font-size:12px;color:#000;letter-spacing:-0.600px;">Value</div>
<div class="t" style="left:954px;top:387px;font-size:12px;color:#000;letter-spacing:-0.100px;">Unit</div>
<div class="t" style="left:988px;top:387px;font-size:12px;color:#000;letter-spacing:0.031px;">Property group</div>
<svg style="left:0;top:0" width="400" height="548"><path d="M349.8 381.2l4.4 3.8-4.4 3.8zM354.6 381.2l4.4 3.8-4.4 3.8z" fill="#111"/><path d="M365.2 406.6H354.8V418.4H366.2V412.4" fill="none" stroke="#666" stroke-width="1.25"/><path d="M357.6 411.2l3.3 3.4 7-7.3" fill="none" stroke="#4a9a1e" stroke-width="2.5"/><path d="M365.2 425.6H354.8V437.4H366.2V431.4" fill="none" stroke="#666" stroke-width="1.25"/><path d="M357.6 430.2l3.3 3.4 7-7.3" fill="none" stroke="#4a9a1e" stroke-width="2.5"/><path d="M365.2 444.6H354.8V456.4H366.2V450.4" fill="none" stroke="#666" stroke-width="1.25"/><path d="M357.6 449.2l3.3 3.4 7-7.3" fill="none" stroke="#4a9a1e" stroke-width="2.5"/><path d="M365.2 463.6H354.8V475.4H366.2V469.4" fill="none" stroke="#666" stroke-width="1.25"/><path d="M357.6 468.2l3.3 3.4 7-7.3" fill="none" stroke="#4a9a1e" stroke-width="2.5"/><path d="M356.3 491.8A5.6 5.6 0 0 1 362 483.20000000000005M365.4 485.40000000000003A5.6 5.6 0 0 1 359.6 494.0" fill="none" stroke="#666" stroke-width="1.25"/><path d="M364.2 483.20000000000005l-2.4-2.2v4.4zM357.6 494.0l2.4 2.2v-4.4z" fill="#666"/><circle cx="360.8" cy="488.6" r="2.1" fill="#4aa832"/></svg>
<svg style="left:0;top:0" width="400" height="548"><path d="M362.5 544.8l3 3.5h-6z" fill="#a8a8a8"/><path d="M380 545.5h7M383.5 545.5v3" stroke="#a8a8a8" stroke-width="1"/></svg>
</body></html>
